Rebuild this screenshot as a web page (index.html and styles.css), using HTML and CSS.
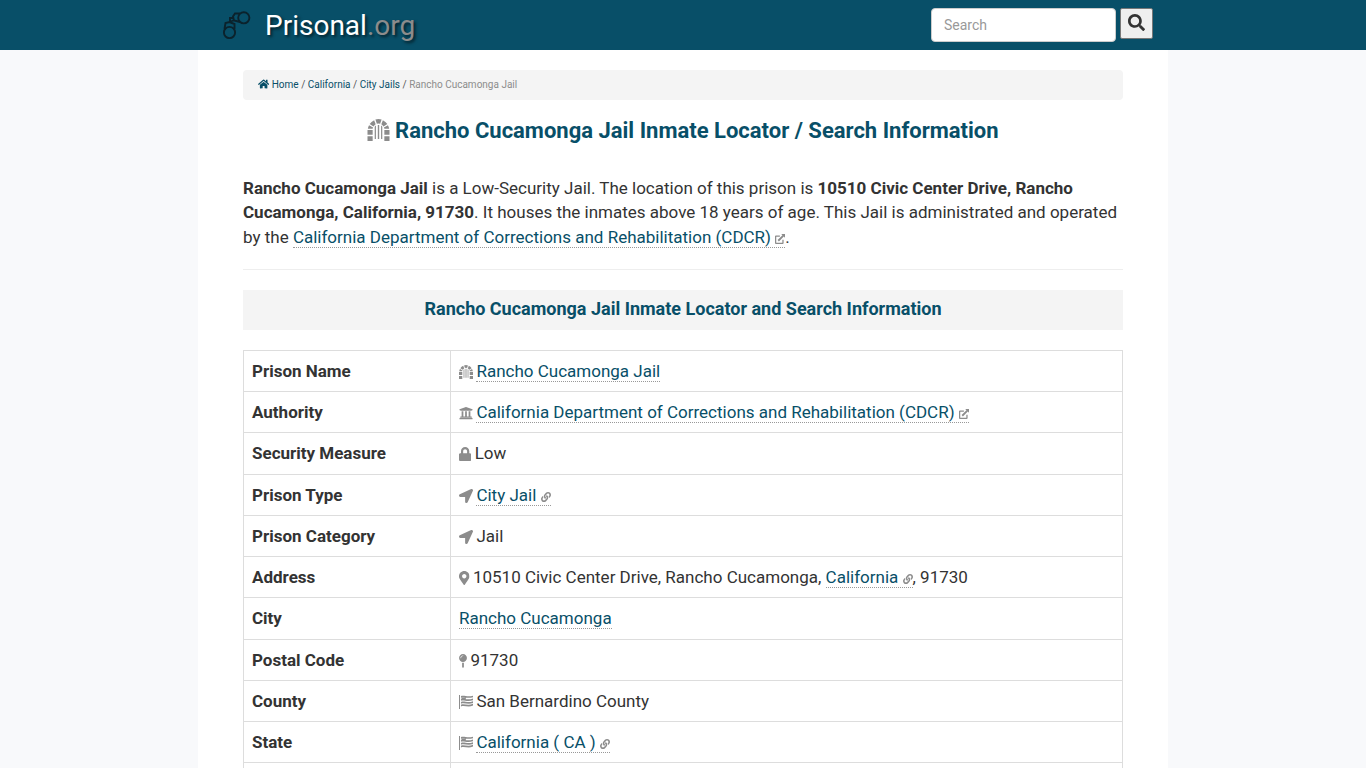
FILE: index.html
```
<!DOCTYPE html>
<html lang="en">
<head>
    <meta charset="UTF-8">
    <meta name="viewport" content="width=device-width, initial-scale=1.0">
    <title>Rancho Cucamonga Jail Inmate Locator</title>
    <link rel="stylesheet" href="styles.css">
</head>
<body>
    <!-- Icon set -->
    <svg class="sprite">
        <symbol id="home" viewBox="0 0 576 512"><path d="M280.37 148.26L96 300.11V464a16 16 0 0 0 16 16l112.06-.29a16 16 0 0 0 15.92-16V368a16 16 0 0 1 16-16h64a16 16 0 0 1 16 16v95.64a16 16 0 0 0 16 16.05L464 480a16 16 0 0 0 16-16V300L295.67 148.26a12.19 12.19 0 0 0-15.3 0zM571.6 251.47L488 182.56V44.05a12 12 0 0 0-12-12h-56a12 12 0 0 0-12 12v72.61L318.47 43a48 48 0 0 0-61 0L4.34 251.47a12 12 0 0 0-1.6 16.9l25.5 31A12 12 0 0 0 45.15 301l235.22-193.74a12.19 12.19 0 0 1 15.3 0L530.9 301a12 12 0 0 0 16.9-1.6l25.5-31a12 12 0 0 0-1.7-16.93z"/></symbol>
        <symbol id="search" viewBox="0 0 512 512"><path d="M505 442.7L405.3 343c-4.5-4.5-10.6-7-17-7H372c27.6-35.3 44-79.7 44-128C416 93.1 322.9 0 208 0S0 93.1 0 208s93.1 208 208 208c48.3 0 92.7-16.4 128-44v16.3c0 6.4 2.5 12.5 7 17l99.7 99.7c9.4 9.4 24.6 9.4 33.9 0l28.3-28.3c9.4-9.4 9.4-24.6.1-34zM208 336c-70.7 0-128-57.2-128-128 0-70.7 57.2-128 128-128 70.7 0 128 57.2 128 128 0 70.7-57.2 128-128 128z"/></symbol>
        <symbol id="dungeon" viewBox="0 0 512 512">
            <path d="M184 14Q256-12 328 14L294 110Q256 98 218 110zM358 28Q424 62 462 118L372 176Q350 142 322 124zM154 28Q88 62 50 118L140 176Q162 142 190 124zM476 148Q498 184 504 228H392Q390 212 382 200zM36 148Q14 184 8 228H120Q122 212 130 200zM0 256H120V368H0zM392 256H512V368H392zM0 400H120V512H0zM392 400H512V512H392zM168 180Q178 164 196 154V464H168zM240 140H272V464H240zM316 154Q334 164 344 180V464H316z"/>
        </symbol>
        <symbol id="university" viewBox="0 0 512 512"><path d="M496 128v16a8 8 0 0 1-8 8h-24v12c0 6.627-5.373 12-12 12H60c-6.627 0-12-5.373-12-12v-12H24a8 8 0 0 1-8-8v-16a8 8 0 0 1 4.941-7.392l232-88a7.996 7.996 0 0 1 6.118 0l232 88A8 8 0 0 1 496 128zm-24 304H40c-13.255 0-24 10.745-24 24v16a8 8 0 0 0 8 8h464a8 8 0 0 0 8-8v-16c0-13.255-10.745-24-24-24zM96 192v192H60c-6.627 0-12 5.373-12 12v20h416v-20c0-6.627-5.373-12-12-12h-36V192h-64v192h-64V192h-64v192h-64V192H96z"/></symbol>
        <symbol id="lock" viewBox="0 0 448 512"><path d="M400 224h-24v-72C376 68.2 307.8 0 224 0S72 68.2 72 152v72H48c-26.5 0-48 21.5-48 48v192c0 26.5 21.5 48 48 48h352c26.5 0 48-21.5 48-48V272c0-26.5-21.5-48-48-48zm-104 0H152v-72c0-39.7 32.3-72 72-72s72 32.3 72 72v72z"/></symbol>
        <symbol id="arrow" viewBox="0 0 512 512"><path d="M444.52 3.52L28.74 195.42c-47.97 22.39-31.98 92.75 19.19 92.75h175.91v175.91c0 51.17 70.36 67.17 92.75 19.19l191.9-415.78c15.99-38.39-25.59-79.97-63.97-63.97z"/></symbol>
        <symbol id="marker" viewBox="0 0 384 512"><path d="M172.268 501.67C26.97 291.031 0 269.413 0 192 0 85.961 85.961 0 192 0s192 85.961 192 192c0 77.413-26.97 99.031-172.268 309.67-9.535 13.774-29.93 13.773-39.464 0zM192 272c44.183 0 80-35.817 80-80s-35.817-80-80-80-80 35.817-80 80 35.817 80 80 80z"/></symbol>
        <symbol id="pin" viewBox="0 0 288 512"><path d="M112 316.94v156.69l22.02 33.02c4.75 7.12 15.22 7.12 19.97 0L176 473.63V316.94c-10.39 1.92-21.06 3.06-32 3.06s-21.61-1.14-32-3.06zM144 0C64.47 0 0 64.47 0 144s64.47 144 144 144 144-64.47 144-144S223.53 0 144 0zm0 76c-37.5 0-68 30.5-68 68 0 6.62-5.38 12-12 12s-12-5.38-12-12c0-50.73 41.28-92 92-92 6.62 0 12 5.38 12 12s-5.38 12-12 12z"/></symbol>
        <symbol id="flag" viewBox="0 0 512 512"><path d="M0 0H36V512H0zM72 40C170-10 300 80 512 26V82C300 136 170 56 72 96zM90 90H250V160H90zM72 146C170 106 300 200 512 126V190C300 254 170 170 72 210zM72 252C190 202 320 306 512 226V290C330 364 190 264 72 316zM72 352C190 302 320 406 512 322V388C330 464 190 364 72 418z"/></symbol>
        <symbol id="link" viewBox="0 0 512 512"><path d="M326.612 185.391c59.747 59.809 58.927 155.698.36 214.59-.11.12-.24.25-.36.37l-67.2 67.2c-59.27 59.27-155.699 59.262-214.96 0-59.27-59.26-59.27-155.7 0-214.96l37.106-37.106c9.84-9.84 26.786-3.3 27.294 10.606.648 17.722 3.826 35.527 9.69 52.721 1.986 5.822.567 12.262-3.783 16.612l-13.087 13.087c-28.026 28.026-28.905 73.66-1.155 101.96 28.024 28.579 74.086 28.749 102.325.51l67.2-67.19c28.191-28.191 28.073-73.757 0-101.83-3.701-3.694-7.429-6.564-10.341-8.569a16.037 16.037 0 0 1-6.947-12.606c-.396-10.567 3.348-21.456 11.698-29.806l21.054-21.055c5.521-5.521 14.182-6.199 20.584-1.731a152.482 152.482 0 0 1 20.522 17.197zM467.547 44.449c-59.261-59.262-155.69-59.27-214.96 0l-67.2 67.2c-.12.12-.25.25-.36.37-58.566 58.892-59.387 154.781.36 214.59a152.454 152.454 0 0 0 20.521 17.196c6.402 4.468 15.064 3.789 20.584-1.731l21.054-21.055c8.35-8.35 12.094-19.239 11.698-29.806a16.037 16.037 0 0 0-6.947-12.606c-2.912-2.005-6.64-4.875-10.341-8.569-28.073-28.073-28.191-73.639 0-101.83l67.2-67.19c28.239-28.239 74.3-28.069 102.325.51 27.75 28.3 26.872 73.934-1.155 101.96l-13.087 13.087c-4.35 4.35-5.769 10.79-3.783 16.612 5.864 17.194 9.042 34.999 9.69 52.721.509 13.906 17.454 20.446 27.294 10.606l37.106-37.106c59.271-59.259 59.271-155.699.001-214.959z"/></symbol>
        <symbol id="external" viewBox="0 0 512 512"><path d="M440 290H376V448H64V136H250V72H48Q0 72 0 120V464Q0 512 48 512H392Q440 512 440 464zM320 0H512V192L450 130 200 380 132 312 382 62z"/></symbol>
    </svg>

    <!-- Top bar -->
    <nav class="navbar">
        <div class="nav-inner">
            <a class="brand" href="#">
                <svg class="logo" viewBox="0 0 30 30">
                    <circle cx="22.8" cy="7.8" r="5.6"/>
                    <circle cx="8.5" cy="22.5" r="5.6"/>
                    <path d="M19 3.500h-5l-2 3 1 4 6 1.500M3.500 19l1-6 4-1 5 2v5M9 12V8h4M9 12l4-2"/>
                </svg>
                <span class="brand-name">Prisonal<span class="brand-tld">.org</span></span>
            </a>
            <form class="search-form">
                <input class="search-input" type="text" placeholder="Search">
                <button class="search-btn" type="button"><svg class="icon"><use href="#search"/></svg></button>
            </form>
        </div>
    </nav>

    <div class="container">
        <div class="breadcrumb">
            <svg class="icon home"><use href="#home"/></svg>
            <a href="#">Home</a> / <a href="#">California</a> / <a href="#">City Jails</a> / <span class="current">Rancho Cucamonga Jail</span>
        </div>

        <h1><svg class="icon"><use href="#dungeon"/></svg> Rancho Cucamonga Jail Inmate Locator / Search Information</h1>

        <p class="intro"><b>Rancho Cucamonga Jail</b> is a Low-Security Jail. The location of this prison is <b>10510 Civic Center Drive, Rancho Cucamonga, California, 91730</b>. It houses the inmates above 18 years of age. This Jail is administrated and operated by the <a class="dotted" href="#">California Department of Corrections and Rehabilitation (CDCR) <svg class="icon small"><use href="#external"/></svg></a>.</p>

        <hr>

        <h2>Rancho Cucamonga Jail Inmate Locator and Search Information</h2>

        <table class="info">
            <tr>
                <th>Prison Name</th>
                <td><svg class="icon"><use href="#dungeon"/></svg> <a class="dotted" href="#">Rancho Cucamonga Jail</a></td>
            </tr>
            <tr>
                <th>Authority</th>
                <td><svg class="icon"><use href="#university"/></svg> <a class="dotted" href="#">California Department of Corrections and Rehabilitation (CDCR) <svg class="icon small"><use href="#external"/></svg></a></td>
            </tr>
            <tr>
                <th>Security Measure</th>
                <td><svg class="icon w-lock"><use href="#lock"/></svg> Low</td>
            </tr>
            <tr>
                <th>Prison Type</th>
                <td><svg class="icon"><use href="#arrow"/></svg> <a class="dotted" href="#">City Jail <svg class="icon small"><use href="#link"/></svg></a></td>
            </tr>
            <tr>
                <th>Prison Category</th>
                <td><svg class="icon"><use href="#arrow"/></svg> Jail</td>
            </tr>
            <tr>
                <th>Address</th>
                <td><svg class="icon w-marker"><use href="#marker"/></svg> 10510 Civic Center Drive, Rancho Cucamonga, <a class="dotted" href="#">California <svg class="icon small"><use href="#link"/></svg></a>, 91730</td>
            </tr>
            <tr>
                <th>City</th>
                <td><a class="dotted" href="#">Rancho Cucamonga</a></td>
            </tr>
            <tr>
                <th>Postal Code</th>
                <td><svg class="icon w-pin"><use href="#pin"/></svg> 91730</td>
            </tr>
            <tr>
                <th>County</th>
                <td><svg class="icon"><use href="#flag"/></svg> San Bernardino County</td>
            </tr>
            <tr>
                <th>State</th>
                <td><svg class="icon"><use href="#flag"/></svg> <a class="dotted" href="#">California ( CA ) <svg class="icon small"><use href="#link"/></svg></a></td>
            </tr>
            <tr>
                <th>&nbsp;</th>
                <td>&nbsp;</td>
            </tr>
        </table>
    </div>
</body>
</html>
```
FILE: styles.css
```
* {
    box-sizing: border-box;
}
body {
    margin: 0;
    height: 100vh;
    overflow: hidden;
    background: #f8f9fb;
    font-family: Roboto, sans-serif;
    font-size: 17px;
    line-height: 1.428;
    color: #333;
}
a {
    color: #084f68;
    text-decoration: none;
}
.sprite {
    display: none;
}
.icon {
    width: 14px;
    height: 14px;
    margin-right: -0.8px;
    fill: #8c8c8c;
    vertical-align: -2px;
}
.small {
    width: 10px;
    height: 10px;
    margin-right: 0;
    vertical-align: -1px;
}
.w-lock {
    width: 12.25px;
}
.w-marker {
    width: 10.5px;
}
.w-pin {
    width: 8px;
}

/* Top bar */
.navbar {
    height: 50px;
    background: #084f68;
}
.nav-inner {
    width: 970px;
    margin: 0 auto;
    padding: 8px 15px 0 23px;
    display: flex;
    justify-content: space-between;
}
.brand {
    display: flex;
}
.logo {
    width: 30px;
    height: 30px;
    margin: 2px 14px 0 0;
    fill: none;
    stroke: #0b222c;
    stroke-width: 1.9;
}
.brand-name {
    font-size: 28px;
    line-height: 35px;
    color: #fff;
    text-shadow: 2px 2px 3px rgba(0, 0, 0, 0.6);
}
.brand-tld {
    color: #8c8c8c;
}
.search-form {
    display: flex;
    align-items: flex-start;
    gap: 4px;
}
.search-input {
    width: 185px;
    height: 34px;
    padding: 6px 12px;
    border: 1px solid #ccc;
    border-radius: 4px;
    font: 14px Roboto, sans-serif;
}
.search-input::placeholder {
    color: #999;
}
.search-btn {
    width: 33px;
    height: 31px;
    padding: 0;
    border: 1px solid #777;
    border-radius: 2px;
    background: #efefef;
}
.search-btn .icon {
    width: 17px;
    height: 17px;
    margin: 0;
    fill: #333;
    vertical-align: -1px;
}

/* Page */
.container {
    width: 970px;
    margin: 0 auto;
    padding: 20px 45px 0;
    background: #fff;
}
.breadcrumb {
    height: 30px;
    padding: 0 15px;
    border-radius: 4px;
    background: #f4f4f4;
    font-size: 10px;
    line-height: 30px;
    color: #555;
}
.breadcrumb .home {
    width: 11.25px;
    height: 10px;
    margin: 0;
    fill: #084f68;
    vertical-align: -1px;
}
.current {
    color: #8c8c8c;
}
h1 {
    height: 24px;
    margin: 19px 0 33px;
    font-size: 22px;
    line-height: 24px;
    font-weight: bold;
    text-align: center;
    color: #084f68;
}
h1 .icon {
    width: 23px;
    height: 22px;
    vertical-align: -3px;
}
.intro {
    margin: 0;
}
.dotted {
    border-bottom: 1px dotted #999;
}
hr {
    margin: 20px 0;
    border: 0;
    border-top: 1px solid #eee;
}
h2 {
    margin: 0 0 20px;
    height: 40px;
    font-size: 18px;
    line-height: 38px;
    font-weight: bold;
    text-align: center;
    color: #084f68;
    background: #f4f4f4;
}
.info {
    width: 100%;
    border-collapse: collapse;
}
.info th,
.info td {
    padding: 8px;
    border: 1px solid #ddd;
    text-align: left;
}
.info th {
    width: 207px;
    font-weight: bold;
}
```
